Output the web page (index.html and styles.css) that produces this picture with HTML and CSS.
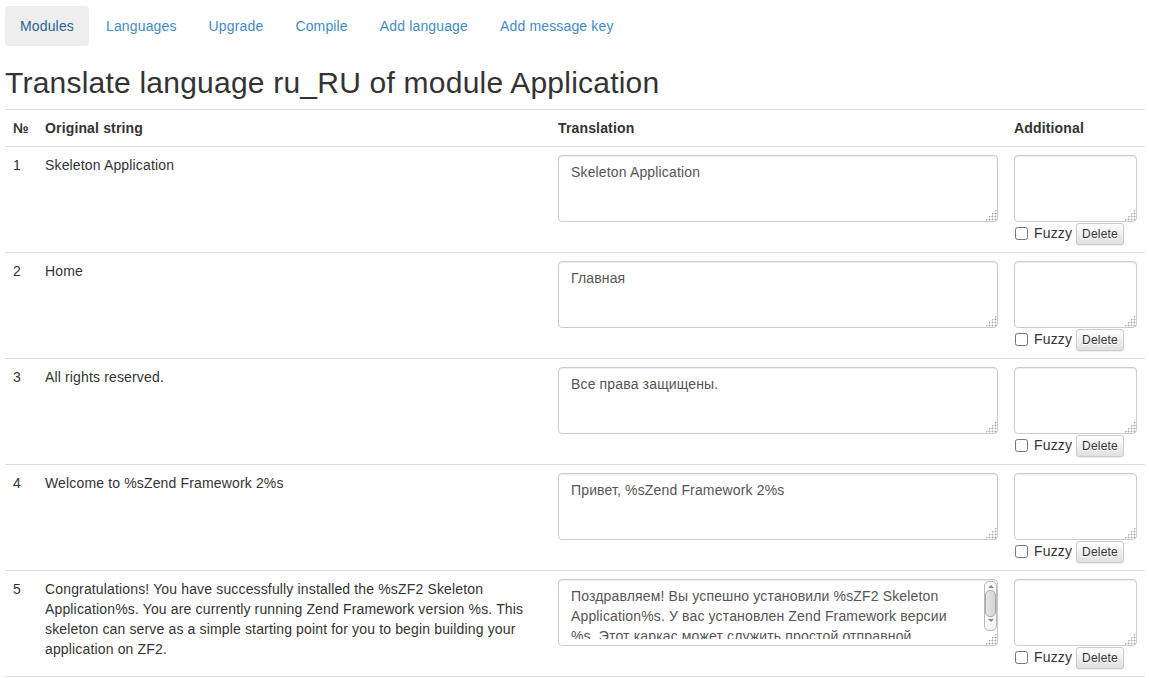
FILE: index.html
```html
<!DOCTYPE html>
<html lang="en">
<head>
<meta charset="utf-8">
<title>Translate language ru_RU of module Application</title>
<link rel="stylesheet" href="styles.css">
</head>
<body>
<div class="page">
  <ul class="nav-pills">
    <li class="active"><a href="#">Modules</a></li>
    <li><a href="#">Languages</a></li>
    <li><a href="#">Upgrade</a></li>
    <li><a href="#">Compile</a></li>
    <li><a href="#">Add language</a></li>
    <li><a href="#">Add message key</a></li>
  </ul>

  <h2 class="title">Translate language ru_RU of module Application</h2>

  <table class="table">
    <thead>
      <tr>
        <th class="col-num">№</th>
        <th class="col-orig">Original string</th>
        <th class="col-trans">Translation</th>
        <th class="col-add">Additional</th>
      </tr>
    </thead>
    <tbody>
      <tr>
        <td>1</td>
        <td>Skeleton Application</td>
        <td><textarea class="form-control trans">Skeleton Application</textarea></td>
        <td>
          <textarea class="form-control add"></textarea>
          <div class="fuzzy-line"><input type="checkbox"><span class="fuzzy">Fuzzy</span><button class="btn-xs" type="button">Delete</button></div>
        </td>
      </tr>
      <tr>
        <td>2</td>
        <td>Home</td>
        <td><textarea class="form-control trans">Главная</textarea></td>
        <td>
          <textarea class="form-control add"></textarea>
          <div class="fuzzy-line"><input type="checkbox"><span class="fuzzy">Fuzzy</span><button class="btn-xs" type="button">Delete</button></div>
        </td>
      </tr>
      <tr>
        <td>3</td>
        <td>All rights reserved.</td>
        <td><textarea class="form-control trans">Все права защищены.</textarea></td>
        <td>
          <textarea class="form-control add"></textarea>
          <div class="fuzzy-line"><input type="checkbox"><span class="fuzzy">Fuzzy</span><button class="btn-xs" type="button">Delete</button></div>
        </td>
      </tr>
      <tr>
        <td>4</td>
        <td>Welcome to %sZend Framework 2%s</td>
        <td><textarea class="form-control trans">Привет, %sZend Framework 2%s</textarea></td>
        <td>
          <textarea class="form-control add"></textarea>
          <div class="fuzzy-line"><input type="checkbox"><span class="fuzzy">Fuzzy</span><button class="btn-xs" type="button">Delete</button></div>
        </td>
      </tr>
      <tr>
        <td>5</td>
        <td>Congratulations! You have successfully installed the %sZF2 Skeleton Application%s. You are currently running Zend Framework version %s. This skeleton can serve as a simple starting point for you to begin building your application on ZF2.</td>
        <td>
          <div class="ta-wrap">
            <textarea class="form-control trans scrolled">Поздравляем! Вы успешно установили %sZF2 Skeleton Application%s. У вас установлен Zend Framework версии %s. Этот каркас может служить простой отправной точкой для начала разработки вашего приложения на ZF2.</textarea>
            <div class="ta-clip" aria-hidden="true"></div>
            <div class="fake-scrollbar" aria-hidden="true">
              <span class="sb-arrow sb-up"></span>
              <span class="sb-thumb"></span>
              <span class="sb-arrow sb-down"></span>
            </div>
          </div>
        </td>
        <td>
          <textarea class="form-control add"></textarea>
          <div class="fuzzy-line"><input type="checkbox"><span class="fuzzy">Fuzzy</span><button class="btn-xs" type="button">Delete</button></div>
        </td>
      </tr>
    </tbody>
  </table>
</div>
</body>
</html>
```

FILE: styles.css
```css
html, body {
  margin: 0;
  padding: 0;
  background: #fff;
}

body {
  font-family: "Liberation Sans", Arial, Helvetica, sans-serif;
  font-size: 14px;
  line-height: 20px;
  letter-spacing: 0.15px;
  color: #333;
}

.page {
  padding: 6px 4px 0 5px;
}

.nav-pills {
  list-style: none;
  margin: 0;
  padding: 0;
  display: flex;
  gap: 2px;
}

.nav-pills a {
  display: block;
  padding: 10px 15px;
  border-radius: 4px;
  color: #428bca;
  text-decoration: none;
}

.nav-pills .active a {
  background: #eee;
  color: #2a6496;
}

.title {
  font-size: 30px;
  font-weight: 500;
  line-height: 33px;
  letter-spacing: 0.22px;
  margin: 20px 0 10px;
  color: #333;
}

.table {
  width: 1140px;
  border-collapse: collapse;
  border-spacing: 0;
  table-layout: fixed;
}

.table th,
.table td {
  padding: 8px;
  line-height: 20px;
  text-align: left;
  vertical-align: top;
  border-top: 1px solid #ddd;
}

.table th {
  font-weight: bold;
  vertical-align: bottom;
  border-bottom: 1px solid #ddd;
}

.table tbody tr:last-child td {
  border-bottom: 1px solid #ddd;
}

.col-num { width: 16px; }
.col-orig { width: 497px; }
.col-trans { width: 440px; }
.col-add { width: 123px; }

.form-control {
  display: block;
  box-sizing: border-box;
  width: 100%;
  height: 67px;
  margin: 0;
  padding: 6px 12px;
  font-family: "Liberation Sans", Arial, Helvetica, sans-serif;
  font-size: 14px;
  line-height: 20px;
  letter-spacing: 0.15px;
  color: #555;
  background: #fff;
  border: 1px solid #ccc;
  border-radius: 4px;
  box-shadow: inset 0 1px 1px rgba(0, 0, 0, 0.075);
}

.form-control::-webkit-resizer {
  background-color: transparent;
  background-image:
    linear-gradient(135deg, #fff 58%, rgba(255, 255, 255, 0) 58%),
    radial-gradient(circle at 1.5px 1.5px, #b0b0b0 0.9px, rgba(255, 255, 255, 0) 1.1px);
  background-size: 100% 100%, 3px 3px;
  background-position: 0 0, 0 0;
}

.ta-wrap {
  position: relative;
}

.form-control.scrolled {
  padding-right: 40px;
  overflow: hidden;
}

.ta-clip {
  position: absolute;
  left: 2px;
  right: 16px;
  bottom: 1px;
  height: 6px;
  background: #fff;
}

.fake-scrollbar {
  position: absolute;
  top: 2px;
  right: 1px;
  width: 13px;
  height: 50px;
  box-sizing: border-box;
  border: 1px solid #b9b9b9;
  border-radius: 5px;
  background: #f7f7f7;
  display: flex;
  flex-direction: column;
  align-items: center;
}

.sb-arrow {
  width: 0;
  height: 0;
  border-left: 3px solid transparent;
  border-right: 3px solid transparent;
  flex: none;
}

.sb-up {
  margin-top: 3px;
  border-bottom: 3px solid #8a8a8a;
}

.sb-down {
  margin-top: 2px;
  border-top: 3px solid #8a8a8a;
}

.sb-thumb {
  margin-top: 2px;
  width: 11px;
  height: 27px;
  box-sizing: border-box;
  border: 1px solid #a9a9a9;
  border-radius: 5px;
  background: linear-gradient(to right, #e6e6e6, #d4d4d4);
  flex: none;
}

.fuzzy-line {
  display: flex;
  align-items: center;
  height: 22px;
}

.fuzzy-line input[type="checkbox"] {
  width: 13px;
  height: 13px;
  margin: 1px 6px 0 1px;
}

.fuzzy {
  margin-right: 4px;
}

.btn-xs {
  font-family: "Liberation Sans", Arial, Helvetica, sans-serif;
  font-size: 12px;
  line-height: 18px;
  letter-spacing: 0.2px;
  padding: 1px 5px;
  margin-top: 1px;
  color: #333;
  border: 1px solid #ccc;
  border-radius: 3px;
  background-image: linear-gradient(to bottom, #fff 0%, #e0e0e0 100%);
  text-shadow: 0 1px 0 #fff;
  box-shadow: inset 0 1px 0 rgba(255, 255, 255, 0.15), 0 1px 1px rgba(0, 0, 0, 0.075);
  cursor: pointer;
}
```
